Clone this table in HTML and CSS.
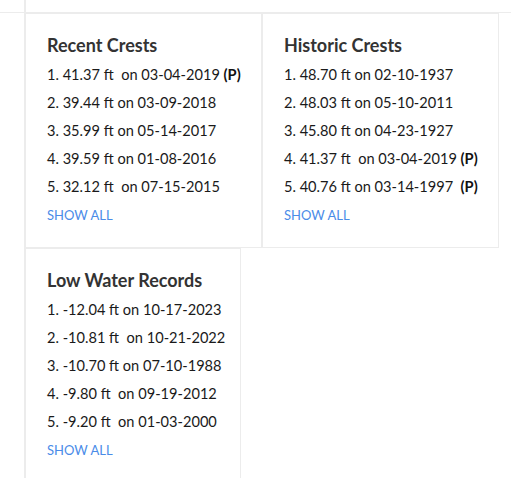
FILE: index.html
```html
<!DOCTYPE html>
<html>
<head>
<meta charset="utf-8">
<link rel="stylesheet" href="styles.css">
</head>
<body>
<div class="top-strip"><div class="top-cell"></div></div>
<div class="grid">
  <section class="card card-a">
    <h3>Recent Crests</h3>
    <ol class="list">
      <li>1.&nbsp;41.37 ft &nbsp;on 03-04-2019 <b>(P)</b></li>
      <li>2. 39.44 ft on 03-09-2018</li>
      <li>3. 35.99 ft on 05-14-2017</li>
      <li>4. 39.59 ft on 01-08-2016</li>
      <li>5. 32.12 ft &nbsp;on 07-15-2015</li>
    </ol>
    <a class="show-all" href="#">SHOW ALL</a>
  </section>
  <section class="card card-b">
    <h3>Historic Crests</h3>
    <ol class="list">
      <li>1.&nbsp;48.70 ft on 02-10-1937</li>
      <li>2. 48.03 ft on 05-10-2011</li>
      <li>3. 45.80 ft on 04-23-1927</li>
      <li>4. 41.37 ft &nbsp;on 03-04-2019 <b>(P)</b></li>
      <li>5. 40.76 ft on 03-14-1997 &nbsp;<b>(P)</b></li>
    </ol>
    <a class="show-all" href="#">SHOW ALL</a>
  </section>
  <section class="card card-c">
    <h3>Low Water Records</h3>
    <ol class="list">
      <li>1.&nbsp;-12.04 ft on 10-17-2023</li>
      <li>2. -10.81 ft &nbsp;on 10-21-2022</li>
      <li>3. -10.70 ft on 07-10-1988</li>
      <li>4. -9.80 ft &nbsp;on 09-19-2012</li>
      <li>5. -9.20 ft &nbsp;on 01-03-2000</li>
    </ol>
    <a class="show-all" href="#">SHOW ALL</a>
  </section>
</div>
</body>
</html>
```
FILE: styles.css
```css
html, body {
  margin: 0;
  padding: 0;
  background: #ffffff;
}
body {
  font-family: Lato, "Open Sans", Arial, sans-serif;
  color: #1a1a1a;
  width: 511px;
  height: 478px;
  overflow: hidden;
}
.top-strip {
  height: 12px;
  border-bottom: 1px solid #ececec;
}
.top-cell {
  margin-left: 24px;
  height: 12px;
  border-left: 2px solid #ececec;
}
.grid {
  display: flex;
  flex-wrap: wrap;
  padding-left: 24px;
}
.card {
  box-sizing: border-box;
  border: 1px solid #ececec;
  padding: 21px 0 18px 21px;
}
.card-a { width: 238px; border-left-width: 2px; }
.card-b { width: 237px; }
.card-c { width: 217px; border-left-width: 2px; }
.card h3 {
  margin: 0 0 6px 0;
  font-size: 18px;
  line-height: 20px;
  font-weight: 700;
  color: #333333;
}
.list {
  list-style: none;
  margin: 0;
  padding: 0;
}
.list li {
  font-size: 14.6px;
  line-height: 28px;
  white-space: nowrap;
  color: #1a1a1a;
}
.list b {
  font-weight: 700;
  color: #111111;
}
.show-all {
  display: block;
  font-size: 13px;
  line-height: 28px;
  color: #4a8ce8;
  text-decoration: none;
}
```
